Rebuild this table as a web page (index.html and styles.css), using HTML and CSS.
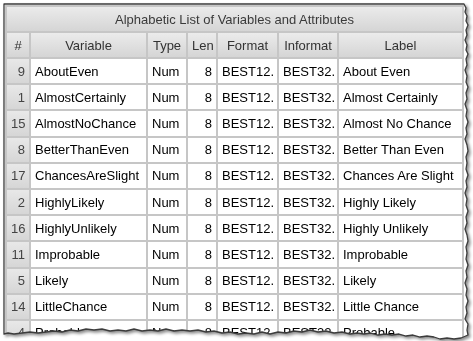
FILE: index.html
```html
<!DOCTYPE html>
<html lang="en">
<head>
  <meta charset="UTF-8" />
  <title>Alphabetic List of Variables and Attributes</title>
  <link rel="stylesheet" href="styles.css">
</head>
<body>
  <div class="sheet">
    <div class="paper">
      <table class="vars">
        <colgroup>
          <col class="c-num">
          <col class="c-var">
          <col class="c-type">
          <col class="c-len">
          <col class="c-fmt">
          <col class="c-infmt">
          <col class="c-label">
        </colgroup>
        <thead>
          <tr class="title"><th colspan="7">Alphabetic List of Variables and Attributes</th></tr>
          <tr class="head">
            <th>#</th><th>Variable</th><th>Type</th><th>Len</th><th>Format</th><th>Informat</th><th>Label</th>
          </tr>
        </thead>
        <tbody>
          <tr><th>9</th><td>AboutEven</td><td>Num</td><td class="r">8</td><td>BEST12.</td><td>BEST32.</td><td>About Even</td></tr>
          <tr><th>1</th><td>AlmostCertainly</td><td>Num</td><td class="r">8</td><td>BEST12.</td><td>BEST32.</td><td>Almost Certainly</td></tr>
          <tr><th>15</th><td>AlmostNoChance</td><td>Num</td><td class="r">8</td><td>BEST12.</td><td>BEST32.</td><td>Almost No Chance</td></tr>
          <tr><th>8</th><td>BetterThanEven</td><td>Num</td><td class="r">8</td><td>BEST12.</td><td>BEST32.</td><td>Better Than Even</td></tr>
          <tr><th>17</th><td>ChancesAreSlight</td><td>Num</td><td class="r">8</td><td>BEST12.</td><td>BEST32.</td><td>Chances Are Slight</td></tr>
          <tr><th>2</th><td>HighlyLikely</td><td>Num</td><td class="r">8</td><td>BEST12.</td><td>BEST32.</td><td>Highly Likely</td></tr>
          <tr><th>16</th><td>HighlyUnlikely</td><td>Num</td><td class="r">8</td><td>BEST12.</td><td>BEST32.</td><td>Highly Unlikely</td></tr>
          <tr><th>11</th><td>Improbable</td><td>Num</td><td class="r">8</td><td>BEST12.</td><td>BEST32.</td><td>Improbable</td></tr>
          <tr><th>5</th><td>Likely</td><td>Num</td><td class="r">8</td><td>BEST12.</td><td>BEST32.</td><td>Likely</td></tr>
          <tr><th>14</th><td>LittleChance</td><td>Num</td><td class="r">8</td><td>BEST12.</td><td>BEST32.</td><td>Little Chance</td></tr>
          <tr><th>4</th><td>Probable</td><td>Num</td><td class="r">8</td><td>BEST12.</td><td>BEST32.</td><td>Probable</td></tr>
        </tbody>
      </table>
    </div>

    <!-- torn paper outline: used as the clip for .paper and stroked on top -->
    <svg class="edge" width="468" height="337" viewBox="0 0 468 337">
      <defs>
        <path id="tear" d="M0,0 H460
          L462,4 L461,8 L463,12 L462,17 L464,21 L462,26 L463,31 L461,36 L463,41 L462,46 L464,50 L462,55
          L463,61 L461,66 L463,72 L462,78 L464,83 L462,89 L463,95 L461,100 L463,106 L462,112 L464,118
          L462,124 L463,130 L461,135 L463,141 L464,147 L462,153 L463,159 L462,165 L464,171 L462,177
          L463,183 L461,189 L463,195 L462,201 L464,207 L462,213 L463,219 L461,225 L463,231 L464,237
          L462,243 L463,249 L462,255 L464,261 L462,267 L463,273 L461,279 L463,285 L462,291 L464,297
          L462,303 L463,309 L461,315 L464,320 L463,326 L464,331
          L457,334 L450,335 L443,334 L436,335 L430,333 L423,332 L416,333 L409,331 L402,332 L395,330
          L388,331 L381,330 L374,331 L367,329 L360,330 L353,329 L346,330 L338,328 L330,329 L322,327
          L314,328 L306,326 L298,328 L290,327 L282,329 L274,328 L266,330 L258,328 L250,330 L242,329
          L234,330 L226,328 L218,329 L210,327 L202,328 L194,326 L186,327 L178,326 L170,327 L162,325
          L154,327 L146,326 L138,327 L130,325 L122,327 L114,326 L106,327 L98,325 L90,326 L82,325
          L74,327 L66,326 L58,328 L50,327 L42,328 L34,329 L26,328 L18,329 L10,330 L4,329 L0,330 Z"/>
        <clipPath id="tear-clip" clipPathUnits="userSpaceOnUse">
          <use href="#tear"/>
        </clipPath>
      </defs>
      <use href="#tear" class="edge-line"/>
    </svg>
  </div>
</body>
</html>
```

FILE: styles.css
```css
* {
  box-sizing: border-box;
}
body {
  margin: 0;
  background: #fff;
  font-family: "Liberation Sans", Arial, sans-serif;
}

/* paper sheet with torn right and bottom edges */
.sheet {
  position: relative;
  width: 468px;
  height: 337px;
  margin: 4px 0 0 4px;
  filter: drop-shadow(2px 2px 1.5px rgba(0, 0, 0, 0.45));
}
.paper {
  width: 100%;
  height: 100%;
  padding: 1px 0 0 1px;
  background: #fff;
  overflow: hidden;
  clip-path: url(#tear-clip);
}
.edge {
  position: absolute;
  left: 0;
  top: 0;
  overflow: visible;
  pointer-events: none;
}
.edge-line {
  fill: none;
  stroke: #3c3c3c;
  stroke-width: 1.3;
  stroke-linejoin: round;
}

/* variables table */
.vars {
  border-collapse: collapse;
  table-layout: fixed;
  width: 457px;
  font-size: 13px;
  color: #000;
}
.c-num   { width: 24px; }
.c-var   { width: 117px; }
.c-type  { width: 40px; }
.c-len   { width: 30px; }
.c-fmt   { width: 61px; }
.c-infmt { width: 60px; }
.c-label { width: 125px; }

.vars th,
.vars td {
  border: 2px solid #c6c6c6;
  height: 26.2px;
  padding: 0 4px;
  white-space: nowrap;
  overflow: hidden;
  vertical-align: middle;
  text-align: left;
  font-weight: normal;
}
.vars thead th {
  height: 26px;
  text-align: center;
  color: #333;
  background: linear-gradient(#ebebeb, #d5d5d5);
}
.vars .title th {
  color: #3a3a3a;
}
.vars tbody th {
  text-align: right;
  color: #444;
  background: linear-gradient(#e8e8e8, #d6d6d6);
}
.vars td.r {
  text-align: right;
}
```
